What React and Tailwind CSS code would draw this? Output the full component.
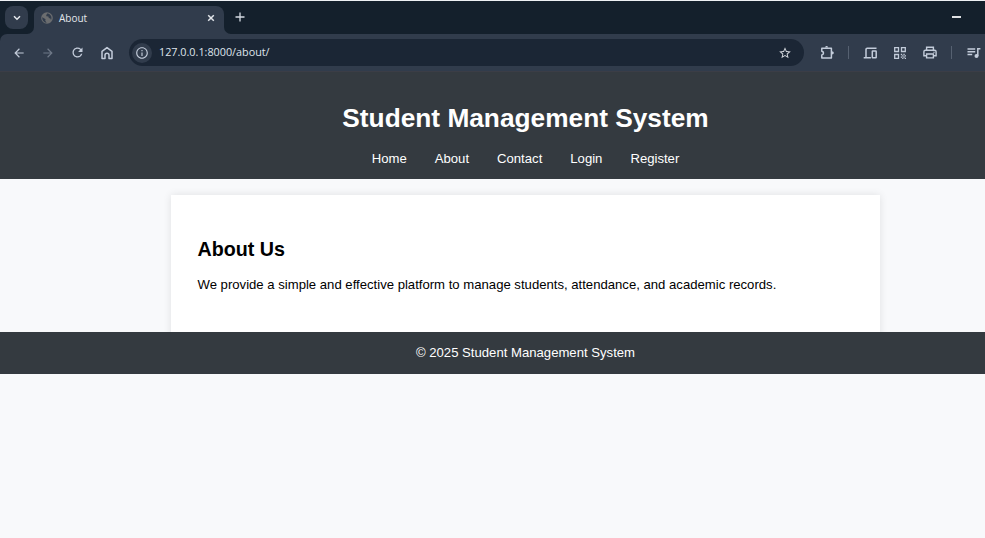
import { MdStarBorder, MdInfoOutline, MdRefresh, MdArrowBack, MdArrowForward } from "react-icons/md";

const stroke = { fill: "none", stroke: "currentColor", strokeWidth: 1.5 };

function GlobeIcon() {
  return (
    <svg width="12" height="12" viewBox="0 0 12 12">
      <circle cx="6" cy="6" r="5.8" fill="#6b6d6f" />
      <path d="M1.3 5.2 4.6 7.3 4.2 8.4 5.6 10.9A5 5 0 0 1 1.3 5.2M6.6 1.2 5.2 2.9l.2 1.3 2 .3.4 1.6 1.6.4.6 1.6A5 5 0 0 0 6.6 1.2" fill="#313c4c" />
    </svg>
  );
}

function HomeIcon() {
  return (
    <svg width="14" height="14" viewBox="0 0 14 14" {...stroke}>
      <path d="M2 5.4 7 1.6l5 3.8v7.1H9V9.3a2 2 0 0 0-4 0v3.2H2z" strokeLinejoin="round" />
    </svg>
  );
}

function PuzzleIcon() {
  return (
    <svg width="15" height="15" viewBox="0 0 15 15" {...stroke}>
      <path d="M1.8 3.2h9.6v9.9H1.8V10c2.3-.4 2.3-3.4 0-3.8z" strokeLinejoin="round" />
      <path d="M5 2.6c.2-2.1 3-2.1 3.2 0z" fill="currentColor" stroke="none" />
      <path d="M11.9 6.2c2.5 0 2.5 3.2 0 3.2z" fill="currentColor" stroke="none" />
    </svg>
  );
}

function DevicesIcon() {
  return (
    <svg width="15" height="14" viewBox="0 0 15 14" {...stroke}>
      <path d="M13.5 2.2H4.2a1.2 1.2 0 0 0-1.2 1.2v8.1M.7 11.8h7.2" />
      <rect x="9.3" y="5.1" width="3.9" height="6.7" rx=".4" />
    </svg>
  );
}

function QrIcon() {
  return (
    <svg width="12" height="12" viewBox="0 0 12 12" {...stroke} strokeWidth="1.3">
      <path d="M.7.7h3.8v3.8H.7zM7.5.7h3.8v3.8H7.5zM.7 7.5h3.8v3.8H.7z" />
      <path d="M6.8 6.8h1.4v1.4H6.8zM9.4 6.8h1.3v1.4H9.4zM8.2 8.2h1.2v1.3H8.2zM10.7 8.2H12v1.3h-1.3zM6.8 9.5h1.4v1.3H6.8zM9.4 9.5h1.3v1.3H9.4zM8.2 10.8h1.2V12H8.2zM10.7 10.8H12V12h-1.3z" fill="currentColor" stroke="none" />
    </svg>
  );
}

function PrinterIcon() {
  return (
    <svg width="14" height="13" viewBox="0 0 14 13" {...stroke} strokeWidth="1.4">
      <path d="M3.6 4.2V1.2h6.8v3M3.6 9.7H.9V5.8a1.5 1.5 0 0 1 1.5-1.5h9.2a1.5 1.5 0 0 1 1.5 1.5v3.9h-2.7" />
      <path d="M3.6 8h6.8v3.9H3.6z" />
      <circle cx="11" cy="6.3" r=".7" fill="currentColor" stroke="none" />
    </svg>
  );
}

function PlaylistIcon() {
  return (
    <svg width="14" height="12" viewBox="0 0 14 12" {...stroke}>
      <path d="M.5 2h7.7M.5 4.8h7.7M.5 7.6h4.7M10.8 9V1.8h2.6" />
      <circle cx="9.5" cy="9" r="2" fill="currentColor" stroke="none" />
    </svg>
  );
}

function Divider() {
  return <div className="h-[13px] w-px shrink-0 bg-[#566171]" />;
}

function TabStrip() {
  return (
    <div className="flex h-[34px] items-start border-t border-[#eef1f4] bg-[#14202c] pl-[5px]">
      <button className="mt-[5px] flex h-[23px] w-[23px] items-center justify-center rounded-[8px] bg-[#313c4c] text-[#e6e9ee]">
        <svg width="8" height="6" viewBox="0 0 8 6" {...stroke}><path d="m1 1.2 3 3 3-3" /></svg>
      </button>
      <svg className="ml-[-1px] mt-[26px]" width="7" height="7" viewBox="0 0 7 7"><path d="M7 0v7H0a7 7 0 0 0 7-7" fill="#313c4c" /></svg>
      <div className="mt-[5px] flex h-[28px] w-[190px] items-center rounded-t-[8px] bg-[#313c4c] pb-[4px] pl-[7px] text-[#e3e6eb]">
        <GlobeIcon />
        <span className="ml-[6px] font-['Open_Sans','Noto_Sans',sans-serif] text-[10px] leading-none">About</span>
        <svg className="ml-auto mr-[9px]" width="8" height="8" viewBox="0 0 8 8" {...stroke}><path d="m1.2 1.2 5.6 5.6m0-5.6L1.2 6.8" /></svg>
      </div>
      <svg className="mt-[26px]" width="7" height="7" viewBox="0 0 7 7"><path d="M0 0v7h7a7 7 0 0 1-7-7" fill="#313c4c" /></svg>
      <svg className="ml-[4px] mt-[11px] text-[#d5dae2]" width="10" height="10" viewBox="0 0 10 10" {...stroke} strokeWidth="1.3"><path d="M5 .5v9M.5 5h9" /></svg>
      <div className="ml-auto mr-[24px] mt-[15px] h-[1.5px] w-[9px] bg-[#dfe1e4]" />
    </div>
  );
}

function Toolbar() {
  return (
    <div className="bg-[#14202c]">
      <div className="flex h-[38px] items-center rounded-tl-[7px] border-b border-[#3b3d46] bg-[#313c4c] pl-[12px] text-[#c3ccda]">
        <MdArrowBack className="h-[14px] w-[14px]" />
        <MdArrowForward className="ml-[15px] h-[14px] w-[14px] text-[#6f7988]" />
        <MdRefresh className="ml-[15px] h-[15px] w-[15px]" />
        <div className="ml-[15px]"><HomeIcon /></div>
        <div className="ml-[15px] flex h-[27px] w-[675px] items-center rounded-full bg-[#1b2635] pl-[3px] pr-[12px]">
          <div className="flex h-[20px] w-[20px] items-center justify-center rounded-full bg-[#313c4c]">
            <MdInfoOutline className="h-[14px] w-[14px]" />
          </div>
          <span className="ml-[7px] font-['Open_Sans','Noto_Sans',sans-serif] text-[10.8px] leading-none text-[#dfe4ec]">127.0.0.1:8000/about/</span>
          <MdStarBorder className="ml-auto h-[14px] w-[14px] text-[#d3d7dd]" />
        </div>
        <div className="ml-[16px]"><PuzzleIcon /></div>
        <div className="ml-[13px] flex"><Divider /></div>
        <div className="ml-[14px]"><DevicesIcon /></div>
        <div className="ml-[16px]"><QrIcon /></div>
        <div className="ml-[17px]"><PrinterIcon /></div>
        <div className="ml-[14px] flex"><Divider /></div>
        <div className="ml-[15px] shrink-0"><PlaylistIcon /></div>
      </div>
    </div>
  );
}

const links = ["Home", "About", "Contact", "Login", "Register"];

export default function App() {
  return (
    <div className="h-[538px] w-[985px] overflow-hidden bg-[#f8f9fb]">
      <TabStrip />
      <Toolbar />
      <div className="w-[1051px] font-['Liberation_Sans',Arial,sans-serif] text-[13.14px]">
        <header className="flex h-[107px] flex-col items-center bg-[#343a40] pt-[31px] text-white">
          <h1 className="text-[26.27px] font-bold leading-[30px]">Student Management System</h1>
          <nav className="mt-[18px] flex gap-[28px] leading-[16px]">
            {links.map((l) => <a key={l}>{l}</a>)}
          </nav>
        </header>
        <main className="h-[153px] overflow-hidden pt-[16px]">
          <section className="mx-auto h-[150px] w-[709px] bg-white pl-[26.5px] pt-[42px] text-black shadow-[0_0_8px_rgba(0,0,0,0.1)]">
            <h2 className="text-[19.7px] font-bold leading-[24px]">About Us</h2>
            <p className="mt-[16px] leading-[16px]">We provide a simple and effective platform to manage students, attendance, and academic records.</p>
          </section>
        </main>
        <footer className="flex h-[42px] items-center justify-center bg-[#343a40] text-white">© 2025 Student Management System</footer>
      </div>
    </div>
  );
}
